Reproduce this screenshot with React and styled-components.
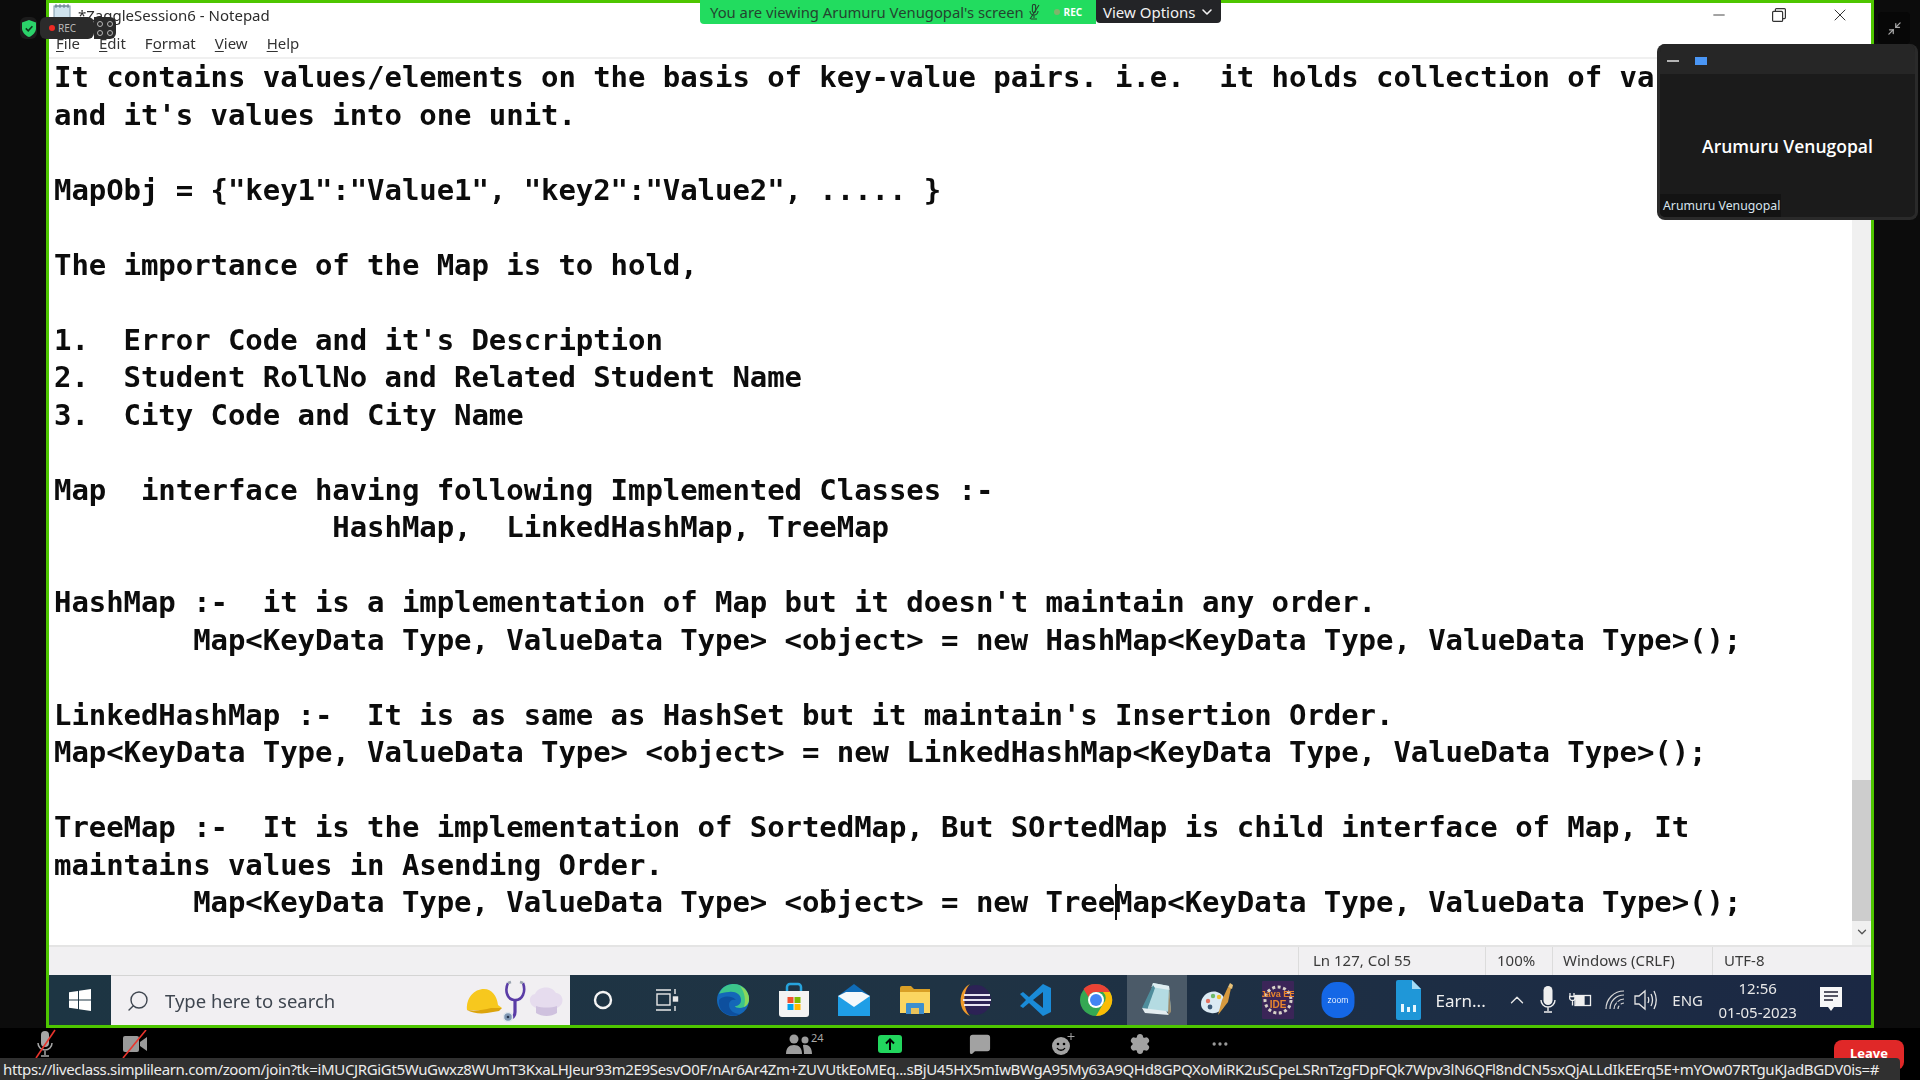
import React from 'react';
import styled, { createGlobalStyle } from 'styled-components';
import { Minus, X, ChevronDown, ChevronUp, Minimize2, Search, Settings, MoreHorizontal, MessageSquare } from 'lucide-react';

const GlobalStyle = createGlobalStyle`
  html, body { margin: 0; padding: 0; background: #000; }
  * { box-sizing: border-box; }
`;

// Page frame
const Page = styled.div`
  position: relative;
  width: 1920px;
  height: 1080px;
  overflow: hidden;
  background: #000;
  display: flex;
  flex-direction: column;
  font-family: "Noto Sans", "Open Sans", sans-serif;
`;

const Stage = styled.div`
  height: 1028px;
  display: flex;
  background: #0c0c0c;
  padding: 0 46px;
`;

const SharedScreen = styled.div`
  width: 1828px;
  height: 1028px;
  border: 3px solid #4ec600;
  background: #fff;
  display: flex;
  flex-direction: column;
  filter: blur(0.35px);
`;

// Notepad chrome
const TitleBar = styled.div`
  height: 24px;
  flex: none;
  display: flex;
  align-items: center;
  padding-left: 3px;
  color: #222;
  font-size: 15px;
`;

const TitleText = styled.span`
  margin-left: 6px;
  color: #2c2c2c;
`;

const WindowControls = styled.div`
  margin-left: auto;
  display: flex;
  align-items: center;
  padding-right: 21px;
  gap: 44px;
  color: #333;
`;

const MenuBar = styled.div`
  height: 32px;
  flex: none;
  display: flex;
  align-items: center;
  padding: 2px 0 0 7px;
  gap: 19px;
  font-size: 15px;
  color: #333;
  border-bottom: 2px solid #f0f0f0;
  u { text-underline-offset: 2px; }
`;

const EditorRow = styled.div`
  flex: 1;
  min-height: 0;
  display: flex;
`;

const Editor = styled.pre`
  flex: 1;
  margin: 0;
  padding: 0 0 0 5px;
  overflow: hidden;
  font-family: "DejaVu Sans Mono", "Liberation Mono", monospace;
  font-weight: 700;
  font-size: 29px;
  letter-spacing: -0.065px;
  line-height: 37.5px;
  color: #0c0c0c;
`;

const Caret = styled.span`
  display: inline-block;
  width: 0;
  height: 36px;
  vertical-align: -8px;
  border-left: 2px solid #111;
  margin-right: -2px;
`;

const ScrollTrack = styled.div`
  width: 19px;
  flex: none;
  background: #f0f0f0;
  display: flex;
  flex-direction: column;
  color: #555;
`;

const ScrollThumb = styled.div`
  margin-top: 721px;
  height: 141px;
  background: #cdcdcd;
`;

const ScrollDown = styled.div`
  margin-top: 4px;
  display: flex;
  justify-content: center;
`;

const StatusBar = styled.div`
  height: 30px;
  flex: none;
  display: flex;
  background: #f1f0f2;
  border-top: 2px solid #e4e4e4;
  color: #3a3a3a;
  font-size: 15px;
  padding-left: 1249px;
`;

const StatusCell = styled.div`
  width: ${p => p.$w}px;
  display: flex;
  align-items: center;
  padding-left: ${p => p.$pad}px;
  padding-bottom: 2px;
  border-left: 1px solid #dcdcdc;
  white-space: nowrap;
`;

// Windows taskbar
const Taskbar = styled.div`
  height: 50px;
  flex: none;
  display: flex;
  align-items: center;
  background: linear-gradient(90deg, #1d3543, #1f3344 50%, #1b2844);
  color: #f0f0f0;
`;

const StartButton = styled.div`
  width: 62px;
  height: 100%;
  display: flex;
  align-items: center;
  justify-content: center;
`;

const SearchBox = styled.div`
  width: 459px;
  height: 100%;
  background: #f1eff2;
  display: flex;
  align-items: center;
  padding: 0 5px 0 15px;
  color: #3f4650;
  font-size: 18.5px;
  border-top: 1px solid #d4d4d4;
`;

const SearchGlass = styled(Search)`
  transform: scaleX(-1);
`;

const SearchLabel = styled.span`
  margin-left: 15px;
`;

const SearchArt = styled.div`
  margin-left: auto;
  display: flex;
  align-items: center;
`;

const TaskCell = styled.div`
  width: ${p => p.$w || 60.5}px;
  height: 100%;
  flex: none;
  display: flex;
  align-items: center;
  justify-content: center;
  background: ${p => (p.$active ? '#4b5a68' : 'transparent')};
`;

const TaskApps = styled.div`
  height: 100%;
  display: flex;
  margin-left: 6px;
`;

const RunningDoc = styled.div`
  margin-left: 26px;
  display: flex;
  align-items: center;
  gap: 15px;
  font-size: 17px;
`;

const Tray = styled.div`
  display: flex;
  align-items: center;
  margin-left: 16px;
  height: 100%;
  color: #e8e8e8;
`;

const TrayItem = styled.div`
  width: ${p => p.$w}px;
  flex: none;
  display: flex;
  justify-content: center;
  align-items: center;
`;

const LangItem = styled(TrayItem)`
  font-size: 15px;
  padding-left: 6px;
`;

const Clock = styled.div`
  width: 96px;
  flex: none;
  text-align: center;
  font-size: 15px;
  line-height: 24px;
`;

// Zoom meeting toolbar
const ZoomBar = styled.div`
  height: 52px;
  flex: none;
  background: #000;
  display: flex;
  align-items: flex-start;
  padding: 3px 0 0 10px;
  color: #9a9a9a;
`;

const ZoomSlot = styled.div`
  width: ${p => p.$w}px;
  height: 26px;
  flex: none;
  display: flex;
  align-items: center;
  justify-content: center;
  position: relative;
`;

const Count = styled.span`
  position: absolute;
  top: -1px;
  left: 57px;
  font-size: 11px;
  color: #a9a9a9;
`;

const ShareUp = styled.div`
  width: 24px;
  height: 18px;
  border-radius: 3px;
  background: #22d65e;
  color: #000;
  display: flex;
  align-items: center;
  justify-content: center;
`;

// Things lying over the shared screen
const ShieldWrap = styled.div`
  position: absolute;
  left: 20px;
  top: 17px;
  width: 17px;
  height: 22px;
  border-radius: 6px;
  background: #1c1c1c;
  display: flex;
  align-items: center;
  justify-content: center;
`;

const RecBadge = styled.div`
  position: absolute;
  left: 40px;
  top: 17px;
  width: 54px;
  height: 22px;
  border-radius: 6px;
  background: #2b2b2b;
  color: #b8b8b8;
  font-size: 10px;
  display: flex;
  align-items: center;
  gap: 3px;
  padding-left: 9px;
`;

const RecDot = styled.i`
  width: 6px;
  height: 6px;
  border-radius: 50%;
  background: ${p => p.$color};
`;

const GridBadge = styled.div`
  position: absolute;
  left: 94px;
  top: 17px;
  width: 22px;
  height: 22px;
  border-radius: 0 6px 6px 0;
  background: #2b2b2b;
  display: grid;
  grid-template-columns: 6px 6px;
  gap: 3px 4px;
  place-content: center;
`;

const GridDot = styled.i`
  width: 6px;
  height: 6px;
  border: 1px solid #b5b5b5;
  border-radius: 50%;
`;

const Banner = styled.div`
  position: absolute;
  left: 700px;
  top: 0;
  height: 24px;
  display: flex;
`;

const BannerMain = styled.div`
  width: 396px;
  background: #22dc5f;
  border-radius: 0 0 0 4px;
  display: flex;
  align-items: center;
  padding-left: 10px;
  font-size: 14.8px;
  color: #24442f;
  white-space: nowrap;
`;

const BannerRec = styled.span`
  margin-left: 14px;
  display: flex;
  align-items: center;
  gap: 4px;
  color: #fff;
  font-size: 10px;
  font-weight: 700;
`;

const ViewOptions = styled.div`
  width: 125px;
  height: 23px;
  background: #232427;
  border-radius: 0 0 4px 4px;
  color: #f2f2f2;
  font-size: 15px;
  display: flex;
  align-items: center;
  padding-left: 7px;
  gap: 4px;
`;

const VideoPanel = styled.div`
  position: absolute;
  left: 1657px;
  top: 44px;
  width: 261px;
  height: 176px;
  border-radius: 8px;
  background: #1b1b1b;
  border: 3px solid #2a2a2a;
  border-top: 0;
  display: flex;
  flex-direction: column;
  overflow: hidden;
`;

const PanelHead = styled.div`
  height: 30px;
  flex: none;
  background: #262626;
  display: flex;
  align-items: center;
  padding: 4px 0 0 7px;
  gap: 16px;
`;

const PanelDash = styled.i`
  width: 12px;
  height: 2px;
  background: #b4b4b4;
`;

const PanelBlue = styled.i`
  width: 12px;
  height: 8px;
  background: #4a96f5;
`;

const PanelName = styled.div`
  flex: 1;
  display: flex;
  align-items: center;
  justify-content: center;
  color: #fff;
  font-family: "Open Sans", sans-serif;
  font-weight: 600;
  font-size: 17.5px;
  padding-top: 24px;
`;

const PanelLabel = styled.div`
  align-self: flex-start;
  height: 23px;
  width: 121px;
  background: #131313;
  color: #d8e4ee;
  font-size: 12.3px;
  line-height: 23px;
  padding-left: 3px;
  white-space: nowrap;
`;

const CollapseButton = styled.div`
  position: absolute;
  left: 1878px;
  top: 12px;
  width: 32px;
  height: 32px;
  border-radius: 4px;
  background: #070707;
  color: #a8a8a8;
  display: flex;
  align-items: center;
  justify-content: center;
`;

const LeaveButton = styled.div`
  position: absolute;
  left: 1834px;
  top: 1040px;
  width: 70px;
  height: 30px;
  border-radius: 8px;
  background: #e02828;
  color: #fff;
  font-size: 13px;
  font-weight: 700;
  text-align: center;
  line-height: 27px;
`;

const UrlTip = styled.div`
  position: absolute;
  left: 0;
  top: 1058px;
  width: 1900px;
  height: 22px;
  background: #303030;
  border-radius: 0 4px 0 0;
  color: #ececec;
  font-size: 15px;
  letter-spacing: -0.35px;
  line-height: 22px;
  padding-left: 3px;
  white-space: nowrap;
  overflow: hidden;
`;

const IBeam = styled.svg`
  position: absolute;
  left: 819px;
  top: 889px;
`;

const NoteIcon = () => (
  <svg width="20" height="24" viewBox="0 0 20 24">
    <rect x="2" y="3" width="16" height="20" fill="#cfe3ee" stroke="#7c97a8" />
    <path d="M3 3h14M4 1v4M8 1v4M12 1v4M16 1v4" stroke="#66808f" fill="none" />
  </svg>
);

const RestoreIcon = () => (
  <svg width="14" height="14" viewBox="0 0 14 14" fill="none" stroke="#333" strokeWidth="1.2">
    <rect x="0.6" y="3.4" width="10" height="10" rx="1" />
    <path d="M3.4 3.2V1.6a1 1 0 0 1 1-1h8a1 1 0 0 1 1 1v8a1 1 0 0 1-1 1h-1.6" />
  </svg>
);

const ShieldIcon = () => (
  <svg width="14" height="17" viewBox="0 0 14 17">
    <path d="M7 0l7 2.6v5.6c0 4-3 7.2-7 8.8-4-1.6-7-4.8-7-8.8V2.6z" fill="#2bd36a" />
    <path d="M3.8 8.4l2.4 2.4 4.2-4.6" fill="none" stroke="#0c3a1d" strokeWidth="1.6" />
  </svg>
);

const MutedTinyMic = () => (
  <svg width="12" height="16" viewBox="0 0 12 16" fill="none" stroke="#24442f" strokeWidth="1.1">
    <path d="M4.4 2a1.6 1.6 0 0 1 3.2 0v5a1.6 1.6 0 0 1-3.2 0zM2 7a4 4 0 0 0 8 0M6 11v3M3 15h6" />
    <path d="M11 1L2 15" />
  </svg>
);

const WinLogo = () => (
  <svg width="22" height="22" viewBox="0 0 22 22" fill="#fff">
    <path d="M0 3.2l9-1.3V10.500H0zM10 1.700L22 0v10.500H10zM0 11.500h9v8.600l-9-1.300zM10 11.500h12V22l-12-1.700z" />
  </svg>
);

const HatArt = () => (
  <svg width="38" height="30" viewBox="0 0 38 30">
    <path d="M2 24C1 12 9 3 19 3c8 0 13 7 14 16l4 3-16 2z" fill="#f7c81e" />
    <path d="M2 24c8 1 17 0 24-2l11 0-3 3-12 2c-7 1-15 0-20-3z" fill="#dca40c" />
  </svg>
);

const StethArt = () => (
  <svg width="24" height="44" viewBox="0 0 24 44" fill="none">
    <path d="M5 4C2 10 3 20 11 21c9 1 12-9 9-17" stroke="#5a3ca6" strokeWidth="2.600" />
    <path d="M5 4l3-1M20 4l-3-1" stroke="#9aa3b0" strokeWidth="2.400" />
    <path d="M12 21v12c0 5-3 6-6 6" stroke="#5a3ca6" strokeWidth="3.200" />
    <circle cx="5" cy="38" r="4.500" fill="#7e96b3" stroke="#dfe6ee" strokeWidth="1.500" />
    <circle cx="5" cy="38" r="1.300" fill="#24344f" />
  </svg>
);

const ChefArt = () => (
  <svg width="38" height="34" viewBox="0 0 38 34">
    <path d="M9 24C1 21 1 11 8 10c2-7 16-10 21-1 8 1 9 12 1 15z" fill="#e6dcee" />
    <path d="M9 22c6 2 15 2 21 0v7c-6 4-15 4-21 0z" fill="#cfc1de" />
  </svg>
);

const CortanaIcon = () => (
  <svg width="22" height="22" viewBox="0 0 22 22">
    <circle cx="11" cy="11" r="8" fill="none" stroke="#f4f4f4" strokeWidth="2.400" />
  </svg>
);

const TaskViewIcon = () => (
  <svg width="24" height="24" viewBox="0 0 24 24" fill="none" stroke="#e8e8e8" strokeWidth="1.400">
    <path d="M1 2h15M1 22h15" />
    <rect x="2" y="6" width="13" height="11" />
    <path d="M20 1v5M20 18v5" />
    <rect x="18.500" y="9" width="4" height="4" fill="#e8e8e8" />
  </svg>
);

const EdgeIcon = () => (
  <svg width="34" height="34" viewBox="0 0 34 34">
    <circle cx="17" cy="17" r="16" fill="#1467b8" />
    <path d="M3 11C6 3 13 1 18 1c9 0 15 7 15 15 0 5-4 9-9 9-3 0-5-1-5-2 3 0 6-2 6-6 0-6-6-9-12-8-4 0-8 1-10 2z" fill="#3cc58b" />
    <path d="M24 3c6 3 9 8 9 13 0 4-2 7-5 8 2-6 1-15-4-21z" fill="#8ad85c" />
    <path d="M20 17c-4-1-7 1-7 5 0 5 5 9 11 9-3 2-7 2-10 1C7 31 2 25 3 17c3-4 12-5 17 0z" fill="#0d4f9e" />
  </svg>
);

const StoreIcon = () => (
  <svg width="32" height="36" viewBox="0 0 32 36">
    <path d="M9 9V5a3 3 0 0 1 3-3h8a3 3 0 0 1 3 3v4" fill="none" stroke="#27a4dd" strokeWidth="2.500" />
    <path d="M1 9h30v23a3 3 0 0 1-3 3H4a3 3 0 0 1-3-3z" fill="#f3f3f3" />
    <rect x="9.500" y="15" width="6" height="6" fill="#f1502f" />
    <rect x="16.500" y="15" width="6" height="6" fill="#7fba00" />
    <rect x="9.500" y="22" width="6" height="6" fill="#00a4ef" />
    <rect x="16.500" y="22" width="6" height="6" fill="#ffb900" />
  </svg>
);

const MailIcon = () => (
  <svg width="34" height="32" viewBox="0 0 34 32">
    <path d="M1 12L17 0l16 12v5H1z" fill="#0f6cb8" />
    <rect x="1" y="12" width="32" height="20" fill="#1f9ee6" />
    <path d="M1 12h0L17 23l16-11-8-4H9z" fill="#f4f8fb" />
  </svg>
);

const FolderIcon = () => (
  <svg width="32" height="30" viewBox="0 0 32 30">
    <path d="M1 3a2 2 0 0 1 2-2h9l3 3h16v24H1z" fill="#d99f26" />
    <path d="M1 7h30v21H1z" fill="#fbd561" />
    <path d="M7 29V19a1 1 0 0 1 1-1h16a1 1 0 0 1 1 1v10z" fill="#3d8fce" />
    <rect x="12" y="23" width="8" height="6" fill="#e8c25a" />
  </svg>
);

const EclipseIcon = () => (
  <svg width="34" height="34" viewBox="0 0 34 34">
    <circle cx="18" cy="17" r="15" fill="#2c2255" />
    <path d="M12 1C1 6-2 27 12 33 5 26 4 9 12 1z" fill="#f09a2a" />
    <path d="M6 12h26M5 17h28M6 22h26" stroke="#e8e4f2" strokeWidth="2" />
  </svg>
);

const VscodeIcon = () => (
  <svg width="32" height="34" viewBox="0 0 32 34">
    <path d="M23 1l8 4v24l-8 4L9 20l-6 5-3-2 6-6-6-6 3-2 6 5z" fill="#1a8bd8" />
    <path d="M23 9L13 17l10 8z" fill="#1f2f3f" />
  </svg>
);

const ChromeIcon = () => (
  <svg width="34" height="34" viewBox="0 0 34 34">
    <circle cx="17" cy="17" r="16" fill="#34a853" />
    <path d="M17 1a16 16 0 0 1 14 8H17a8 8 0 0 0-7.500 5L4.500 6A16 16 0 0 1 17 1z" fill="#ea4335" />
    <path d="M31 9a16 16 0 0 1-14 24l7-12a8 8 0 0 0 0-12z" fill="#fbbc05" />
    <circle cx="17" cy="17" r="8" fill="#fff" />
    <circle cx="17" cy="17" r="6" fill="#4285f4" />
  </svg>
);

const NotepadBig = () => (
  <svg width="32" height="36" viewBox="0 0 32 36">
    <path d="M12 1l16 3 2 26-24-2z" fill="#b4dbe2" />
    <path d="M12 1l16 3 .500 4-18-3z" fill="#dfeef2" />
    <path d="M12 3L1 26l5 2L14 6z" fill="#4f8d9c" />
    <path d="M1 26l24 3 3 4-24-2z" fill="#e4edf0" />
    <path d="M28 6l2 24-3 3z" fill="#9b8a6a" />
  </svg>
);

const PaintIcon = () => (
  <svg width="36" height="36" viewBox="0 0 36 36">
    <path d="M2 22C2 14 10 8 18 10c7 2 9 8 7 14-2 5-8 8-13 7-6-1-10-4-10-9z" fill="#dbeaf3" />
    <circle cx="9" cy="19" r="2.200" fill="#e2705f" />
    <circle cx="14" cy="14" r="2.200" fill="#6dbb6a" />
    <circle cx="20" cy="15" r="2.200" fill="#f2c230" />
    <circle cx="11" cy="25" r="2.400" fill="#3c5a78" />
    <path d="M19 33l4-15 6-13 3 1-3 14z" fill="#d79a3e" />
    <path d="M29 5l2-4 3 2-1 4z" fill="#e8c27a" />
  </svg>
);

const GameIcon = () => (
  <svg width="32" height="38" viewBox="0 0 32 38">
    <rect width="32" height="38" rx="1" fill="#3b2558" />
    <circle cx="16" cy="19" r="13" fill="none" stroke="#d8d2c8" strokeWidth="3" strokeDasharray="3 2.500" />
    <text x="16" y="16" textAnchor="middle" fontFamily="Liberation Sans" fontWeight="700" fontSize="9" fill="#e8862e">Java EE</text>
    <text x="16" y="27" textAnchor="middle" fontFamily="Liberation Sans" fontWeight="700" fontSize="10" fill="#e8862e">IDE</text>
  </svg>
);

const ZoomIcon = () => (
  <svg width="34" height="36" viewBox="0 0 34 36">
    <rect x="0.500" width="33" height="36" rx="15" fill="#1467e6" />
    <text x="17" y="21" textAnchor="middle" fontFamily="Liberation Sans" fontSize="8.500" fill="#e4eeff">zoom</text>
  </svg>
);

const DocIcon = () => (
  <svg width="26" height="40" viewBox="0 0 26 40">
    <path d="M1 2a2 2 0 0 1 2-2h14l9 9v29a2 2 0 0 1-2 2H3a2 2 0 0 1-2-2z" fill="#1f97d8" />
    <path d="M17 0l9 9h-9z" fill="#a5dcf5" />
    <rect x="6" y="24" width="3" height="8" fill="#e7f6fd" />
    <rect x="12" y="27" width="3" height="5" fill="#e7f6fd" />
    <rect x="18" y="25" width="3" height="7" fill="#e7f6fd" />
  </svg>
);

const MicTray = () => (
  <svg width="16" height="28" viewBox="0 0 16 28">
    <rect x="3.500" y="0" width="9" height="19" rx="4.500" fill="#efefef" />
    <path d="M1 14a7 7 0 0 0 14 0M8 21v4M4 26h8" fill="none" stroke="#efefef" strokeWidth="1.400" />
  </svg>
);

const BatteryPlug = () => (
  <svg width="23" height="16" viewBox="0 0 23 16" fill="none" stroke="#efefef" strokeWidth="1.300">
    <rect x="6" y="3.500" width="15.500" height="10" />
    <rect x="7" y="4.500" width="8" height="8" fill="#efefef" />
    <path d="M1 1v3M5 1v3M0 4.500h6.500c0 3-1 4-3 4s-3-1-3-4zM3.500 8.500v5" stroke="#efefef" />
  </svg>
);

const WifiTray = () => (
  <svg width="20" height="20" viewBox="0 0 20 20" fill="none" stroke="#d6d6d6" strokeWidth="1.200">
    <path d="M1 19C1 9 9 1 19 1M5 19C5 11 11 5 19 5M9 19c0-5 5-10 10-10M13 19c0-3 3-6 6-6" />
    <path d="M12 12l7 7" stroke="#1c2a44" strokeWidth="2" />
  </svg>
);

const SpeakerTray = () => (
  <svg width="24" height="22" viewBox="0 0 24 22" fill="none" stroke="#e4e4e4" strokeWidth="1.300">
    <path d="M1 7h4l6-5v18l-6-5H1z" />
    <path d="M14 8c1 2 1 4 0 6M17 5c2 4 2 8 0 12M20 2c3 6 3 12 0 18" />
  </svg>
);

const NotifyIcon = () => (
  <svg width="22" height="26" viewBox="0 0 22 26">
    <path d="M0 0h22v20H14l-3 4-3-4H0z" fill="#f7f7f7" />
    <path d="M4 5h14M4 9h14M4 13h9" stroke="#223" strokeWidth="1.400" />
  </svg>
);

const SlashedMic = () => (
  <svg width="24" height="30" viewBox="0 0 24 30" fill="none">
    <rect x="8" y="2" width="8" height="16" rx="4" fill="#a6a6a6" />
    <path d="M5 14a7 7 0 0 0 14 0M12 22v4M8 27h8" stroke="#a6a6a6" strokeWidth="1.500" />
    <path d="M22 1L3 29" stroke="#e8342c" strokeWidth="1.600" />
  </svg>
);

const SlashedVideo = () => (
  <svg width="26" height="28" viewBox="0 0 26 28" fill="none">
    <rect x="1" y="6" width="16" height="16" rx="2" fill="#9a9a9a" />
    <path d="M18 12l7-5v14l-7-5z" fill="#9a9a9a" />
    <path d="M24 0L1 28" stroke="#e8342c" strokeWidth="1.600" />
  </svg>
);

const PeopleIcon = () => (
  <svg width="26" height="20" viewBox="0 0 26 20" fill="#9d9d9d">
    <circle cx="8" cy="5" r="4.500" />
    <path d="M0 20c0-6 3-9 8-9s8 3 8 9z" />
    <circle cx="19" cy="6" r="3.500" />
    <path d="M17 11c5-1 9 2 9 9h-8c0-4-1-7-1-9z" />
  </svg>
);

const ArrowUpIcon = () => (
  <svg width="10" height="12" viewBox="0 0 10 12" fill="none" stroke="#000" strokeWidth="2">
    <path d="M5 12V2M1 5.500l4-4 4 4" />
  </svg>
);

const ReactIcon = () => (
  <svg width="24" height="24" viewBox="0 0 24 24">
    <circle cx="10" cy="14" r="9" fill="#a2a2a2" />
    <circle cx="7" cy="12" r="1.300" fill="#000" />
    <circle cx="13" cy="12" r="1.300" fill="#000" />
    <path d="M6 16c2 3 6 3 8 0" stroke="#000" fill="none" strokeWidth="1.300" />
    <path d="M20 1v7M16.500 4.500h7" stroke="#a2a2a2" strokeWidth="1" />
  </svg>
);

const lines = [
  "It contains values/elements on the basis of key-value pairs. i.e.  it holds collection of va",
  "and it's values into one unit.",
  "",
  'MapObj = {"key1":"Value1", "key2":"Value2", ..... }',
  "",
  "The importance of the Map is to hold,",
  "",
  "1.  Error Code and it's Description",
  "2.  Student RollNo and Related Student Name",
  "3.  City Code and City Name",
  "",
  "Map  interface having following Implemented Classes :-",
  "                HashMap,  LinkedHashMap, TreeMap",
  "",
  "HashMap :-  it is a implementation of Map but it doesn't maintain any order.",
  "        Map<KeyData Type, ValueData Type> <object> = new HashMap<KeyData Type, ValueData Type>();",
  "",
  "LinkedHashMap :-  It is as same as HashSet but it maintain's Insertion Order.",
  "Map<KeyData Type, ValueData Type> <object> = new LinkedHashMap<KeyData Type, ValueData Type>();",
  "",
  "TreeMap :-  It is the implementation of SortedMap, But SOrtedMap is child interface of Map, It",
  "maintains values in Asending Order.",
];

const TASK_APPS = [
  { Icon: CortanaIcon, w: 54.5 }, { Icon: TaskViewIcon, w: 72.5 }, { Icon: EdgeIcon }, { Icon: StoreIcon },
  { Icon: MailIcon }, { Icon: FolderIcon }, { Icon: EclipseIcon }, { Icon: VscodeIcon }, { Icon: ChromeIcon },
  { Icon: NotepadBig, active: true }, { Icon: PaintIcon }, { Icon: GameIcon }, { Icon: ZoomIcon },
];

const URL_TEXT = 'https://liveclass.simplilearn.com/zoom/join?tk=iMUCJRGiGt5WuGwxz8WUmT3KxaLHJeur93m2E9SesvO0F/nAr6Ar4Zm+ZUVUtkEoMEq...sBjU45HX5mIwBWgA95My63A9QHd8GPQXoMiRK2uSCpeLSRnTzgFDpFQk7Wpv3lN6QFl8ndCN5sxQjALLdIkEErq5E+mYOw07RTguKJadBGDV0is=#';

const App = () => (
  <Page>
    <GlobalStyle />
    <Stage>
      <SharedScreen>
        <TitleBar>
          <NoteIcon />
          <TitleText>*ZaggleSession6 - Notepad</TitleText>
          <WindowControls>
            <Minus size={18} strokeWidth={1.2} />
            <RestoreIcon />
            <X size={20} strokeWidth={1.2} />
          </WindowControls>
        </TitleBar>
        <MenuBar>
          <span><u>F</u>ile</span>
          <span><u>E</u>dit</span>
          <span>F<u>o</u>rmat</span>
          <span><u>V</u>iew</span>
          <span><u>H</u>elp</span>
        </MenuBar>
        <EditorRow>
          <Editor>
            {lines.join('\n')}
            {'\n        Map<KeyData Type, ValueData Type> <object> = new Tree'}
            <Caret />
            {'Map<KeyData Type, ValueData Type>();'}
          </Editor>
          <ScrollTrack>
            <ScrollThumb />
            <ScrollDown><ChevronDown size={14} strokeWidth={2.2} /></ScrollDown>
          </ScrollTrack>
        </EditorRow>
        <StatusBar>
          <StatusCell $w={187} $pad={14}>Ln 127, Col 55</StatusCell>
          <StatusCell $w={67} $pad={11}>100%</StatusCell>
          <StatusCell $w={160} $pad={10}>Windows (CRLF)</StatusCell>
          <StatusCell $w={158} $pad={11}>UTF-8</StatusCell>
        </StatusBar>
        <Taskbar>
          <StartButton><WinLogo /></StartButton>
          <SearchBox>
            <SearchGlass size={24} strokeWidth={1.4} />
            <SearchLabel>Type here to search</SearchLabel>
            <SearchArt>
              <HatArt />
              <StethArt />
              <ChefArt />
            </SearchArt>
          </SearchBox>
          <TaskApps>
            {TASK_APPS.map(({ Icon, w, active }, i) => (
              <TaskCell key={i} $w={w} $active={active}><Icon /></TaskCell>
            ))}
          </TaskApps>
          <RunningDoc>
            <DocIcon />
            <span>Earn...</span>
          </RunningDoc>
          <Tray>
            <TrayItem $w={30}><ChevronUp size={22} strokeWidth={1.5} /></TrayItem>
            <TrayItem $w={32}><MicTray /></TrayItem>
            <TrayItem $w={34}><BatteryPlug /></TrayItem>
            <TrayItem $w={34}><WifiTray /></TrayItem>
            <TrayItem $w={28}><SpeakerTray /></TrayItem>
            <LangItem $w={50}>ENG</LangItem>
            <Clock>12:56<br />01-05-2023</Clock>
            <TrayItem $w={50}><NotifyIcon /></TrayItem>
          </Tray>
        </Taskbar>
      </SharedScreen>
    </Stage>
    <ZoomBar>
      <ZoomSlot $w={70}><SlashedMic /></ZoomSlot>
      <ZoomSlot $w={0}><ChevronUp size={13} /></ZoomSlot>
      <ZoomSlot $w={110}><SlashedVideo /></ZoomSlot>
      <ZoomSlot $w={564} />
      <ZoomSlot $w={90}><PeopleIcon /><Count>24</Count></ZoomSlot>
      <ZoomSlot $w={92}><ShareUp><ArrowUpIcon /></ShareUp></ZoomSlot>
      <ZoomSlot $w={88}><MessageSquare size={22} fill="#a2a2a2" stroke="#a2a2a2" /></ZoomSlot>
      <ZoomSlot $w={78}><ReactIcon /></ZoomSlot>
      <ZoomSlot $w={76}><Settings size={22} fill="#a2a2a2" color="#a2a2a2" /></ZoomSlot>
      <ZoomSlot $w={84}><MoreHorizontal size={20} /></ZoomSlot>
    </ZoomBar>

    <ShieldWrap><ShieldIcon /></ShieldWrap>
    <RecBadge><RecDot $color="#ee2a24" />REC</RecBadge>
    <GridBadge><GridDot /><GridDot /><GridDot /><GridDot /></GridBadge>
    <Banner>
      <BannerMain>
        You are viewing Arumuru Venugopal's screen&nbsp;
        <MutedTinyMic />
        <BannerRec><RecDot $color="#7fb56b" />REC</BannerRec>
      </BannerMain>
      <ViewOptions>View Options <ChevronDown size={16} strokeWidth={2.4} /></ViewOptions>
    </Banner>
    <VideoPanel>
      <PanelHead><PanelDash /><PanelBlue /></PanelHead>
      <PanelName>Arumuru Venugopal</PanelName>
      <PanelLabel>Arumuru Venugopal</PanelLabel>
    </VideoPanel>
    <CollapseButton><Minimize2 size={15} /></CollapseButton>
    <IBeam width="12" height="24" viewBox="0 0 12 24" fill="none">
      <path d="M2 1h3l1 1 1-1h3M6 2v20M2 23h3l1-1 1 1h3" stroke="#000" strokeWidth="1.600" />
    </IBeam>
    <LeaveButton>Leave</LeaveButton>
    <UrlTip>{URL_TEXT}</UrlTip>
  </Page>
);

export default App;
